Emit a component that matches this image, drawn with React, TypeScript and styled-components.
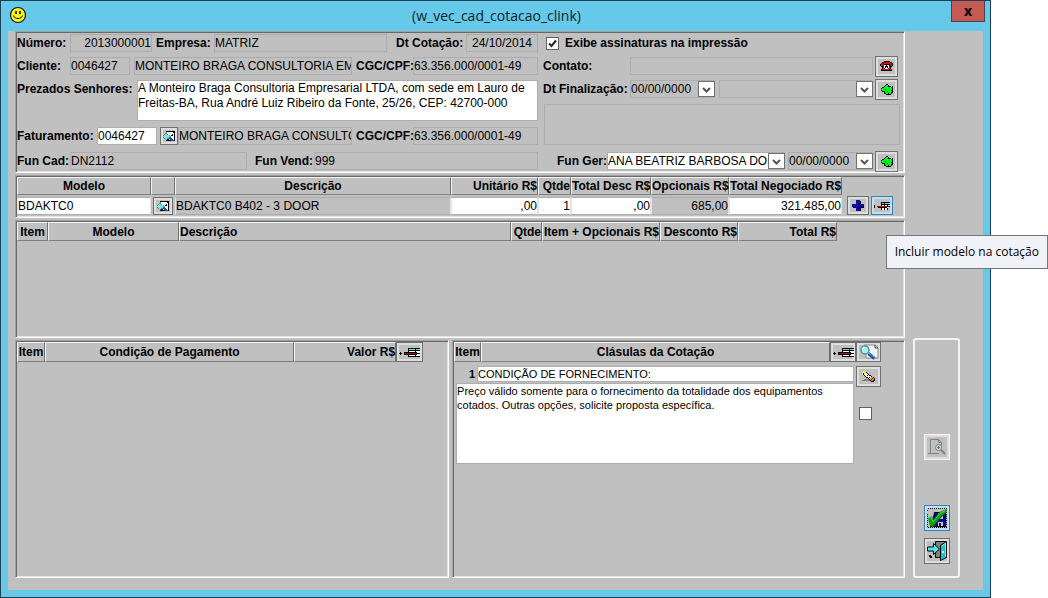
import React from "react";
import styled, { createGlobalStyle, css } from "styled-components";

const sans = `"Liberation Sans", Arial, sans-serif`;
const humanist = `"Open Sans", "Noto Sans", sans-serif`;

const GlobalStyle = createGlobalStyle`
  *, *::before, *::after { box-sizing: border-box; }
  body { margin: 0; background: #fff; color: #000; font: 12px/16px ${sans}; }
  input, select, textarea, button { font: inherit; color: inherit; margin: 0; border-radius: 0; }
`;

/* ---------- window chrome ---------- */

const Desktop = styled.div`
  position: relative;
  display: flex;
  min-height: 100vh;
  padding-right: 57px;
`;

const Window = styled.main`
  flex: 1;
  min-width: 0;
  display: flex;
  flex-direction: column;
  padding-bottom: 7px;
  background: #66c9e9;
  border: 1px solid #1d3f50;
`;

const TitleBar = styled.header`
  display: grid;
  grid-template-columns: 34px 1fr 34px;
  height: 30px;
  padding: 0 5px 0 7px;
`;

const Title = styled.h1`
  margin: 0;
  padding-top: 5px;
  text-align: center;
  font: 14px/20px ${humanist};
  color: #10242c;
`;

const AppIcon = styled.svg`
  width: 18px;
  height: 18px;
  margin: 5px 0 0 1px;
`;

const CloseButton = styled.button`
  height: 21px;
  padding: 0;
  background: #c45a52;
  border: 1px solid #4b4347;
  border-top: 0;
  font: bold 14px/16px ${humanist};
`;

const Client = styled.div`
  flex: 1;
  display: flex;
  gap: 8px;
  margin: 0 7px;
  padding: 0 23px 12px 7px;
  background: #c0c0c0;
`;

const Stack = styled.div`
  flex: 1;
  min-width: 0;
  display: flex;
  flex-direction: column;
  gap: 2px;
`;

const Panel = styled.section<{ $grow?: string; $min?: number }>`
  flex: ${(p) => p.$grow ?? "none"};
  min-width: 0;
  min-height: ${(p) => p.$min ?? 0}px;
  padding: 1px;
  border: 1px solid;
  border-color: #a0a0a0 #fff #fff #a0a0a0;
  box-shadow: inset 1px 1px 0 #696969, inset -1px -1px 0 #e3e3e3;
`;

const SplitRow = styled.div`
  flex: 1;
  display: flex;
  gap: 3px;
`;

const SideBar = styled.aside`
  flex: none;
  width: 47px;
  margin-top: 307px;
  padding-bottom: 12px;
  display: flex;
  flex-direction: column;
  align-items: center;
  justify-content: flex-end;
  gap: 7px;
  border: 2px solid #f4f4f4;
  border-radius: 3px;
`;

/* ---------- form parts ---------- */

const FormGrid = styled.div`
  display: grid;
  grid-template-columns: minmax(0, 521fr) minmax(0, 360fr);
  column-gap: 5px;
  padding: 1px 0;
`;

const FormColumn = styled.div`
  display: grid;
  grid-template-rows: 18px 18px 42px 20px 18px;
  row-gap: 5px;
  align-items: start;
`;

const Row = styled.div<{ $end?: boolean }>`
  display: flex;
  align-items: center;
  min-width: 0;
  height: 18px;
  justify-content: ${(p) => (p.$end ? "flex-end" : "flex-start")};
`;

const Label = styled.label<{ $w?: number; $left?: number }>`
  flex: none;
  width: ${(p) => (p.$w ? `${p.$w}px` : "auto")};
  padding-left: ${(p) => p.$left ?? 0}px;
  font-weight: bold;
  line-height: 18px;
  white-space: nowrap;
`;

const field = css`
  display: block;
  min-width: 0;
  height: 18px;
  padding: 0;
  border: 1px solid #adadad;
  background: #c0c0c0;
  outline: none;
`;

const Field = styled.input<{ $w?: number; $white?: boolean; $align?: string; $gap?: number }>`
  ${field}
  flex: ${(p) => (p.$w ? `0 0 ${p.$w}px` : "1 1 0")};
  width: ${(p) => (p.$w ? `${p.$w}px` : "auto")};
  margin-right: ${(p) => p.$gap ?? 0}px;
  text-align: ${(p) => p.$align ?? "left"};
  ${(p) => p.$white && "background: #fff;"}
`;

const Memo = styled.textarea<{ $white?: boolean; $h: number }>`
  ${field}
  flex: 1;
  width: 100%;
  height: ${(p) => p.$h}px;
  line-height: 15px;
  resize: none;
  overflow: hidden;
  ${(p) => p.$white && "background: #fff;"}
`;

const MemoRow = styled.div`
  display: flex;
  align-items: flex-start;
`;

const Combo = styled.div<{ $w?: number; $gap?: number }>`
  display: grid;
  align-items: center;
  flex: ${(p) => (p.$w ? `0 0 ${p.$w}px` : "1 1 0")};
  min-width: 0;
  margin-right: ${(p) => p.$gap ?? 0}px;
  & > * { grid-area: 1 / 1; }
`;

const Select = styled.select<{ $white?: boolean }>`
  ${field}
  width: 100%;
  appearance: none;
  ${(p) => p.$white && "background: #fff;"}
`;

const ComboField = styled.input`
  ${field}
  width: 100%;
`;

const Arrow = styled.svg`
  justify-self: end;
  width: 17px;
  height: 16px;
  background: #fff;
  border: 1px solid #707070;
  pointer-events: none;
`;

const CheckLabel = styled.label`
  display: flex;
  align-items: center;
  gap: 6px;
  padding-left: 3px;
  font-weight: bold;
`;

const CheckBox = styled.input`
  appearance: none;
  width: 13px;
  height: 13px;
  margin: 0;
  border: 1px solid #606060;
  background: #fff;
`;

const CheckCell = styled.span`
  display: grid;
  & > * { grid-area: 1 / 1; }
  svg { width: 13px; height: 13px; pointer-events: none; }
`;

const IconButton = styled.button<{ $w: number; $h: number; $active?: boolean; $disabled?: boolean; $gap?: number }>`
  flex: none;
  display: flex;
  align-items: center;
  justify-content: center;
  width: ${(p) => p.$w}px;
  height: ${(p) => p.$h}px;
  margin-left: ${(p) => p.$gap ?? 0}px;
  padding: 0;
  border: 1px solid ${(p) => (p.$active ? "#4180ac" : p.$disabled ? "#f4f4f4" : "#707070")};
  background: #c0c0c0;
  box-shadow: inset 0 0 0 2px ${(p) => (p.$active ? "#bde2f7" : "#dedede")};
  svg { flex: none; display: block; }
`;

/* ---------- tables ---------- */

const TableRow = styled.div`
  display: flex;
  align-items: flex-end;
`;

const Grid = styled.table`
  flex: 1;
  min-width: 0;
  width: 100%;
  table-layout: fixed;
  border-collapse: separate;
  border-spacing: 0;
`;

const Th = styled.th<{ $align?: string; $w?: number; $h?: number }>`
  width: ${(p) => (p.$w ? `${p.$w}px` : "auto")};
  height: ${(p) => p.$h ?? 19}px;
  padding: 0;
  text-align: ${(p) => p.$align ?? "center"};
  line-height: 16px;
  white-space: nowrap;
  border: 1px solid;
  border-color: #f4f4f4 #707070 #808080 #f4f4f4;
`;

const Td = styled.td`
  height: 20px;
  padding: 1px 0 0;
  vertical-align: middle;
`;

const CellInput = styled.input<{ $gray?: boolean; $right?: boolean }>`
  ${field}
  width: 100%;
  background: ${(p) => (p.$gray ? "#c0c0c0" : "#fff")};
  border-color: #adadad #e3e3e3 #adadad #e3e3e3;
  text-align: ${(p) => (p.$right ? "right" : "left")};
`;

const Actions = styled.div<{ $w: number }>`
  flex: none;
  display: flex;
  width: ${(p) => p.$w}px;
`;

const ClauseRow = styled.div`
  display: flex;
  align-items: flex-start;
  padding-top: 4px;
  gap: 2px;
`;

const ClauseBody = styled.div`
  flex: 1;
  min-width: 0;
  padding-left: 2px;
  font-size: 11px;
`;

const ClauseTitle = styled.div`
  display: flex;
  align-items: center;
  height: 16px;
  margin-bottom: 1px;
`;

const ClauseNumber = styled.b`
  width: 21px;
  padding-right: 2px;
  text-align: right;
`;

const ClauseInput = styled.input`
  ${field}
  flex: 1;
  height: 16px;
  background: #fff;
`;

const ClauseText = styled.textarea`
  ${field}
  width: 100%;
  height: 81px;
  line-height: 14px;
  resize: none;
  background: #fff;
`;

const ClauseTools = styled.div`
  display: flex;
  flex-direction: column;
  gap: 20px;
  width: 47px;
  input { margin-left: 3px; }
`;

const SideGap = styled.div`
  height: 31px;
`;

const SideSpace = styled.span`
  flex: none;
  width: 5px;
`;

const MemoWrap = styled.div`
  grid-row: 3 / span 2;
  display: grid;
  gap: 6px;
`;

const MemoInset = styled.div`
  padding: 0 3px 0 1px;
`;

const LastRow = styled.div`
  grid-row: 5;
`;

const Tooltip = styled.div`
  position: absolute;
  top: 235px;
  right: 0;
  padding: 7px 8px;
  border: 1px solid #767676;
  background: #f1f2f7;
  font: 12px/18px ${humanist};
  white-space: nowrap;
`;

/* ---------- icons ---------- */

const palette: Record<string, string> = {
  k: "#000", g: "#00f51d", r: "#d01010", w: "#fff", y: "#f6ee3a", o: "#e08a30",
  c: "#6fe3ea", b: "#1c52b8", s: "#808080", l: "#e8e8e8", n: "#0a0a9c", d: "#9c1a14",
};

function PixelIcon({ rows }: { rows: string[] }) {
  return (
    <svg width={rows[0].length} height={rows.length} shapeRendering="crispEdges" aria-hidden="true">
      {rows.flatMap((row, y) =>
        [...row].map((ch, x) =>
          ch === "." ? null : <rect key={`${x}-${y}`} x={x} y={y} width="1" height="1" fill={palette[ch]} />
        )
      )}
    </svg>
  );
}

const HAND = [
  ".....kk.....",
  "....kggk....",
  "...kgggkkk.k",
  ".kkggggggggk",
  "kggggggggggk",
  "ggggkggggggk",
  "kgggggggggkk",
  ".kkkggkggggk",
  "...kggggggkk",
  "...kkggkggk.",
  ".....kkkkk..",
];

const PHONE = [
  "....kkkkkk...",
  "..kkrrrrrrkk.",
  ".krrrrrrrrrrk",
  "krrrkkkkkkrrk",
  "krrkwwkwwkrrk",
  ".kkrwkkkwrkk.",
  "..krwkwkwrk..",
  "..krrwwwrrk..",
  ".krrrrrrrrrk.",
  ".kkkkkkkkkkk.",
];

const INSERT = [
  ".........kkkkkkkkkkkk",
  ".........kcccccckcccc",
  ".........kkkkkkkkkkkk",
  ".........kwwwwwwkwwww",
  ".k...kkkkkkkkkkkkkwww",
  "kkk..kdddddddddddkkkk",
  ".k...kkkkkkkkkkkkkwww",
  ".........kwwwwwwkwwww",
  ".........kkkkkkkkkkkk",
];

const INSERT_SMALL = [
  ".......kkkkkkkkk",
  ".......kcckcccc.",
  ".......kkkkkkkkk",
  "k......kwwkwwkww",
  "k..ddddddddddkkk",
  "k...kkkkkkkkkww.",
  ".......kwwkwwk..",
  ".......kwwkwwk..",
];

const LOOKUP = [
  "...kkkkkkkkk",
  "...swwwwwwkk",
  "..sswwwwwwwk",
  ".sccswwwwkwk",
  "scccccswkkwk",
  "cclccccswwwk",
  "scccccbbwwwk",
  ".sccssbbbwwk",
  "...skkwbbbwk",
  "...kkkkkbbbk",
];

const PENCIL = [
  ".yy...........",
  "yyyyk.........",
  "ykyywk........",
  ".kywwwk.......",
  "..kwwkwkk.....",
  "...kwwwwwk....",
  "....kkwkwook..",
  "......kwoorok.",
  "..ssssskorook.",
  "sssssssskookk.",
  ".........kkk..",
];

const PLUS = [
  "....nnnn....",
  "....nnnnk...",
  "....nnnnk...",
  "....nnnnk...",
  "nnnnnnnnnnnn",
  "nnnnnnnnnnnn",
  "nnnnnnnnnnnn",
  ".kkknnnnkkkk",
  "....nnnnk...",
  "....nnnnk...",
  "....nnnnk...",
];

const ClauseLookupIcon = () => (
  <svg width="20" height="16" viewBox="0 0 20 16" aria-hidden="true">
    <path d="M5 1h11l3 3v10H7V8z" fill="#f4f4f4" stroke="#8a8a8a" />
    <path d="M16 1v3h3" fill="none" stroke="#444" />
    <circle cx="6" cy="6" r="4" fill="#a9ecf2" stroke="#4e90a6" strokeWidth="1.5" />
    <path d="M3.500 5l2-2" stroke="#fff" strokeWidth="1.5" />
    <path d="M9.500 9.500l6 5" stroke="#174fa8" strokeWidth="3" />
    <path d="M10 9l5.500 4.500" stroke="#5aa5ef" />
  </svg>
);

const PreviewIcon = () => (
  <svg width="18" height="18" viewBox="0 0 18 18" fill="none" stroke="#808080" aria-hidden="true">
    <path d="M2.500 15V1.500h8l3 3V8M10.500 1.500v3h3M0 15.500h11" />
    <circle cx="10.500" cy="9.500" r="3" fill="#d6d6d6" />
    <path d="M10.500 8v3M9 9.500h3" stroke="#2b9a80" />
    <path d="M13 12l4 4" strokeWidth="2" />
  </svg>
);

const SaveIcon = () => (
  <svg width="20" height="20" viewBox="0 0 20 20" aria-hidden="true">
    <rect x=".5" y=".5" width="19" height="19" fill="none" stroke="#000" strokeDasharray="1 1" shapeRendering="crispEdges" />
    <path d="M7.500 4.500h11v14h-12v-9z" fill="#0b0b96" stroke="#000" />
    <path d="M11 5h5v6h-5z" fill="#b8c0c8" />
    <path d="M11 14h5v4h-5z" fill="#c9c9c9" />
    <path d="M12 15h2v3h-2z" fill="#0b0b96" />
    <path d="M1 10l4-2 1.500 4L12.500 4 19.500 1v3.500L14 9 7 18l-4 .5z" fill="#129a1a" />
    <path d="M3 18.500l4-.5 7-9 5.500-4.500" fill="none" stroke="#064a0a" />
    <path d="M2 10.500l2.500-1L6 14l7-8.500 5.500-3" fill="none" stroke="#4fd04f" />
  </svg>
);

const ExitIcon = () => (
  <svg width="20" height="20" viewBox="0 0 20 20" aria-hidden="true">
    <path d="M8.500.5h10v16h-10z" fill="#808080" stroke="#000" />
    <path d="M19.500.5v16l-6 3v-15z" fill="#22bcc4" stroke="#000" />
    <path d="M15 5l3.500-3v13.500" fill="none" stroke="#7cf0f4" />
    <path d="M15 11h2" stroke="#fff" strokeWidth="1.500" />
    <path d="M.5 6h6V2.500l6 5.500-6 5.500V10h-6z" fill="#4fe6ee" stroke="#000" />
    <path d="M2 14h2v1h1v2H3v-1H2z" fill="#000" />
  </svg>
);

const Chevron = () => (
  <Arrow viewBox="0 0 15 14" aria-hidden="true">
    <path d="M4 6l3.500 3.500L11 6" fill="none" stroke="#555" strokeWidth="2" />
  </Arrow>
);

/* ---------- sections ---------- */

function HeaderForm() {
  return (
    <FormGrid>
      <FormColumn>
        <Row>
          <Label htmlFor="num" $w={53}>Número:</Label>
          <Field id="num" $w={82} $align="right" readOnly value="2013000001" />
          <Label htmlFor="emp" $w={62} $left={4}>Empresa:</Label>
          <Field id="emp" $gap={9} readOnly value="MATRIZ" />
          <Label htmlFor="dt" $w={70}>Dt Cotação:</Label>
          <Field id="dt" $w={72} readOnly $align="center" value="24/10/2014" />
        </Row>
        <Row>
          <Label htmlFor="cli" $w={53}>Cliente:</Label>
          <Field id="cli" $w={60} $gap={4} readOnly value="0046427" />
          <Field aria-label="Nome do cliente" readOnly value="MONTEIRO BRAGA CONSULTORIA EMPRESARIAL" />
          <Label htmlFor="cgc" $w={61} $left={4}>CGC/CPF:</Label>
          <Field id="cgc" $w={125} readOnly value="63.356.000/0001-49" />
        </Row>
        <MemoRow>
          <Label htmlFor="prez" $w={120}>Prezados Senhores:</Label>
          <Memo
            id="prez"
            $h={41}
            $white
            defaultValue={"A Monteiro Braga Consultoria Empresarial LTDA, com sede em Lauro de\nFreitas-BA, Rua André Luiz Ribeiro da Fonte, 25/26, CEP: 42700-000"}
          />
        </MemoRow>
        <Row>
          <Label htmlFor="fat" $w={80}>Faturamento:</Label>
          <Field id="fat" $w={60} $gap={3} $white defaultValue="0046427" />
          <IconButton type="button" aria-label="Buscar faturamento" $w={18} $h={18}>
            <PixelIcon rows={LOOKUP} />
          </IconButton>
          <Field aria-label="Nome do faturamento" readOnly value="MONTEIRO BRAGA CONSULTORIA EMPRESARIAL" />
          <Label htmlFor="cgc2" $w={61} $left={4}>CGC/CPF:</Label>
          <Field id="cgc2" $w={125} readOnly value="63.356.000/0001-49" />
        </Row>
        <Row>
          <Label htmlFor="cad" $w={53}>Fun Cad:</Label>
          <Field id="cad" readOnly value="DN2112" />
          <Label htmlFor="vend" $w={67} $left={8}>Fun Vend:</Label>
          <Field id="vend" $w={224} readOnly value="999" />
        </Row>
      </FormColumn>
      <FormColumn>
        <Row>
          <CheckLabel>
            <CheckCell>
              <CheckBox type="checkbox" defaultChecked />
              <svg viewBox="0 0 13 13" aria-hidden="true">
                <path d="M3 6.500l2.500 2.500L10 3.500" fill="none" stroke="#222" strokeWidth="2" />
              </svg>
            </CheckCell>
            Exibe assinaturas na impressão
          </CheckLabel>
        </Row>
        <Row>
          <Label htmlFor="cont" $w={87}>Contato:</Label>
          <Field id="cont" readOnly value="" />
          <IconButton type="button" aria-label="Telefone" $w={23} $h={21} $gap={2}>
            <PixelIcon rows={PHONE} />
          </IconButton>
          <SideSpace />
        </Row>
        <MemoWrap>
          <Row>
            <Label htmlFor="fin" $w={87}>Dt Finalização:</Label>
            <Combo $w={85} $gap={4}>
              <ComboField id="fin" defaultValue="00/00/0000" />
              <Chevron />
            </Combo>
            <Combo>
              <Select aria-label="Motivo da finalização" />
              <Chevron />
            </Combo>
            <IconButton type="button" aria-label="Finalizar" $w={23} $h={21} $gap={2}>
              <PixelIcon rows={HAND} />
            </IconButton>
            <SideSpace />
          </Row>
          <MemoInset>
            <Memo aria-label="Observação" $h={41} readOnly />
          </MemoInset>
        </MemoWrap>
        <LastRow>
          <Row $end>
            <Label htmlFor="ger" $w={50}>Fun Ger:</Label>
            <Combo $w={178} $gap={3}>
              <Select id="ger" $white>
                <option>ANA BEATRIZ BARBOSA DO</option>
              </Select>
              <Chevron />
            </Combo>
            <Combo $w={85}>
              <ComboField aria-label="Data do gerente" defaultValue="00/00/0000" />
              <Chevron />
            </Combo>
            <IconButton type="button" aria-label="Aprovar" $w={23} $h={21} $gap={2}>
              <PixelIcon rows={HAND} />
            </IconButton>
            <SideSpace />
          </Row>
        </LastRow>
      </FormColumn>
    </FormGrid>
  );
}

function ModelEntry() {
  return (
    <TableRow>
      <Grid>
        <thead>
          <tr>
            <Th $w={134} $h={18}>Modelo</Th>
            <Th $w={24} $h={18} aria-label="Buscar" />
            <Th $h={18}>Descrição</Th>
            <Th $w={87} $h={18} $align="right">Unitário R$</Th>
            <Th $w={33} $h={18} $align="right">Qtde</Th>
            <Th $w={80} $h={18} $align="right">Total Desc R$</Th>
            <Th $w={78} $h={18} $align="right">Opcionais R$</Th>
            <Th $w={113} $h={18} $align="right">Total Negociado R$</Th>
          </tr>
        </thead>
        <tbody>
          <tr>
            <Td><CellInput aria-label="Modelo" defaultValue="BDAKTC0" /></Td>
            <Td>
              <IconButton type="button" aria-label="Buscar modelo" $w={20} $h={18} $gap={2}>
                <PixelIcon rows={LOOKUP} />
              </IconButton>
            </Td>
            <Td><CellInput aria-label="Descrição" $gray readOnly value="BDAKTC0 B402 - 3 DOOR" /></Td>
            <Td><CellInput aria-label="Unitário" $right defaultValue=",00" /></Td>
            <Td><CellInput aria-label="Quantidade" $right defaultValue="1" /></Td>
            <Td><CellInput aria-label="Total desconto" $right defaultValue=",00" /></Td>
            <Td><CellInput aria-label="Opcionais" $gray $right readOnly value="685,00" /></Td>
            <Td><CellInput aria-label="Total negociado" $right defaultValue="321.485,00" /></Td>
          </tr>
        </tbody>
      </Grid>
      <Actions $w={61}>
        <IconButton type="button" aria-label="Adicionar" $w={22} $h={19} $gap={5}>
          <PixelIcon rows={PLUS} />
        </IconButton>
        <IconButton type="button" aria-label="Incluir modelo na cotação" $w={22} $h={19} $gap={2} $active>
          <PixelIcon rows={INSERT_SMALL} />
        </IconButton>
      </Actions>
    </TableRow>
  );
}

function ItemList() {
  return (
    <TableRow>
      <Grid>
        <thead>
          <tr>
            <Th $w={31}>Item</Th>
            <Th $w={131}>Modelo</Th>
            <Th $align="left">Descrição</Th>
            <Th $w={31} $align="right">Qtde</Th>
            <Th $w={118} $align="right">Item + Opcionais R$</Th>
            <Th $w={78} $align="right">Desconto R$</Th>
            <Th $w={99} $align="right">Total R$</Th>
          </tr>
        </thead>
      </Grid>
      <Actions $w={66} />
    </TableRow>
  );
}

function PaymentList() {
  return (
    <TableRow>
      <Grid>
        <thead>
          <tr>
            <Th $w={28} $h={20}>Item</Th>
            <Th $h={20}>Condição de Pagamento</Th>
            <Th $w={102} $h={20} $align="right">Valor R$</Th>
          </tr>
        </thead>
      </Grid>
      <Actions $w={51}>
        <IconButton type="button" aria-label="Incluir condição" $w={27} $h={20}>
          <PixelIcon rows={INSERT} />
        </IconButton>
      </Actions>
    </TableRow>
  );
}

function ClauseList() {
  return (
    <>
      <TableRow>
        <Grid>
          <thead>
            <tr>
              <Th $w={27} $h={20}>Item</Th>
              <Th $h={20}>Clásulas da Cotação</Th>
            </tr>
          </thead>
        </Grid>
        <Actions $w={73}>
          <IconButton type="button" aria-label="Incluir cláusula" $w={26} $h={20}>
            <PixelIcon rows={INSERT} />
          </IconButton>
          <IconButton type="button" aria-label="Buscar cláusula" $w={25} $h={20}>
            <ClauseLookupIcon />
          </IconButton>
        </Actions>
      </TableRow>
      <ClauseRow>
        <ClauseBody>
          <ClauseTitle>
            <ClauseNumber>1</ClauseNumber>
            <ClauseInput aria-label="Título da cláusula" defaultValue="CONDIÇÃO DE FORNECIMENTO:" />
          </ClauseTitle>
          <ClauseText
            aria-label="Texto da cláusula"
            defaultValue={"Preço válido somente para o fornecimento da totalidade dos equipamentos\ncotados. Outras opções, solicite proposta específica."}
          />
        </ClauseBody>
        <ClauseTools>
          <IconButton type="button" aria-label="Editar cláusula" $w={25} $h={21}>
            <PixelIcon rows={PENCIL} />
          </IconButton>
          <CheckBox type="checkbox" aria-label="Selecionar cláusula" />
        </ClauseTools>
      </ClauseRow>
    </>
  );
}

export default function App() {
  return (
    <Desktop>
      <GlobalStyle />
      <Window>
        <TitleBar>
          <AppIcon viewBox="0 0 18 18" aria-hidden="true">
            <circle cx="9" cy="9" r="7.500" fill="#fbf518" stroke="#111" strokeWidth="1.200" />
            <path d="M7 5v3M11 5v3" stroke="#000" strokeWidth="1.500" />
            <path d="M4.500 9.500c1 4 8 4 9 0" fill="none" stroke="#000" />
          </AppIcon>
          <Title>(w_vec_cad_cotacao_clink)</Title>
          <CloseButton type="button" aria-label="Fechar">x</CloseButton>
        </TitleBar>
        <Client>
          <Stack>
            <Panel $min={142}><HeaderForm /></Panel>
            <Panel $min={43}><ModelEntry /></Panel>
            <Panel $min={118}><ItemList /></Panel>
            <SplitRow>
              <Panel $grow="434 1 0"><PaymentList /></Panel>
              <Panel $grow="453 1 0"><ClauseList /></Panel>
            </SplitRow>
          </Stack>
          <SideBar>
            <IconButton type="button" aria-label="Visualizar" $w={26} $h={26} $disabled>
              <PreviewIcon />
            </IconButton>
            <SideGap />
            <IconButton type="button" aria-label="Salvar" $w={26} $h={26} $active>
              <SaveIcon />
            </IconButton>
            <IconButton type="button" aria-label="Sair" $w={26} $h={26}>
              <ExitIcon />
            </IconButton>
          </SideBar>
        </Client>
      </Window>
      <Tooltip role="tooltip">Incluir modelo na cotação</Tooltip>
    </Desktop>
  );
}
